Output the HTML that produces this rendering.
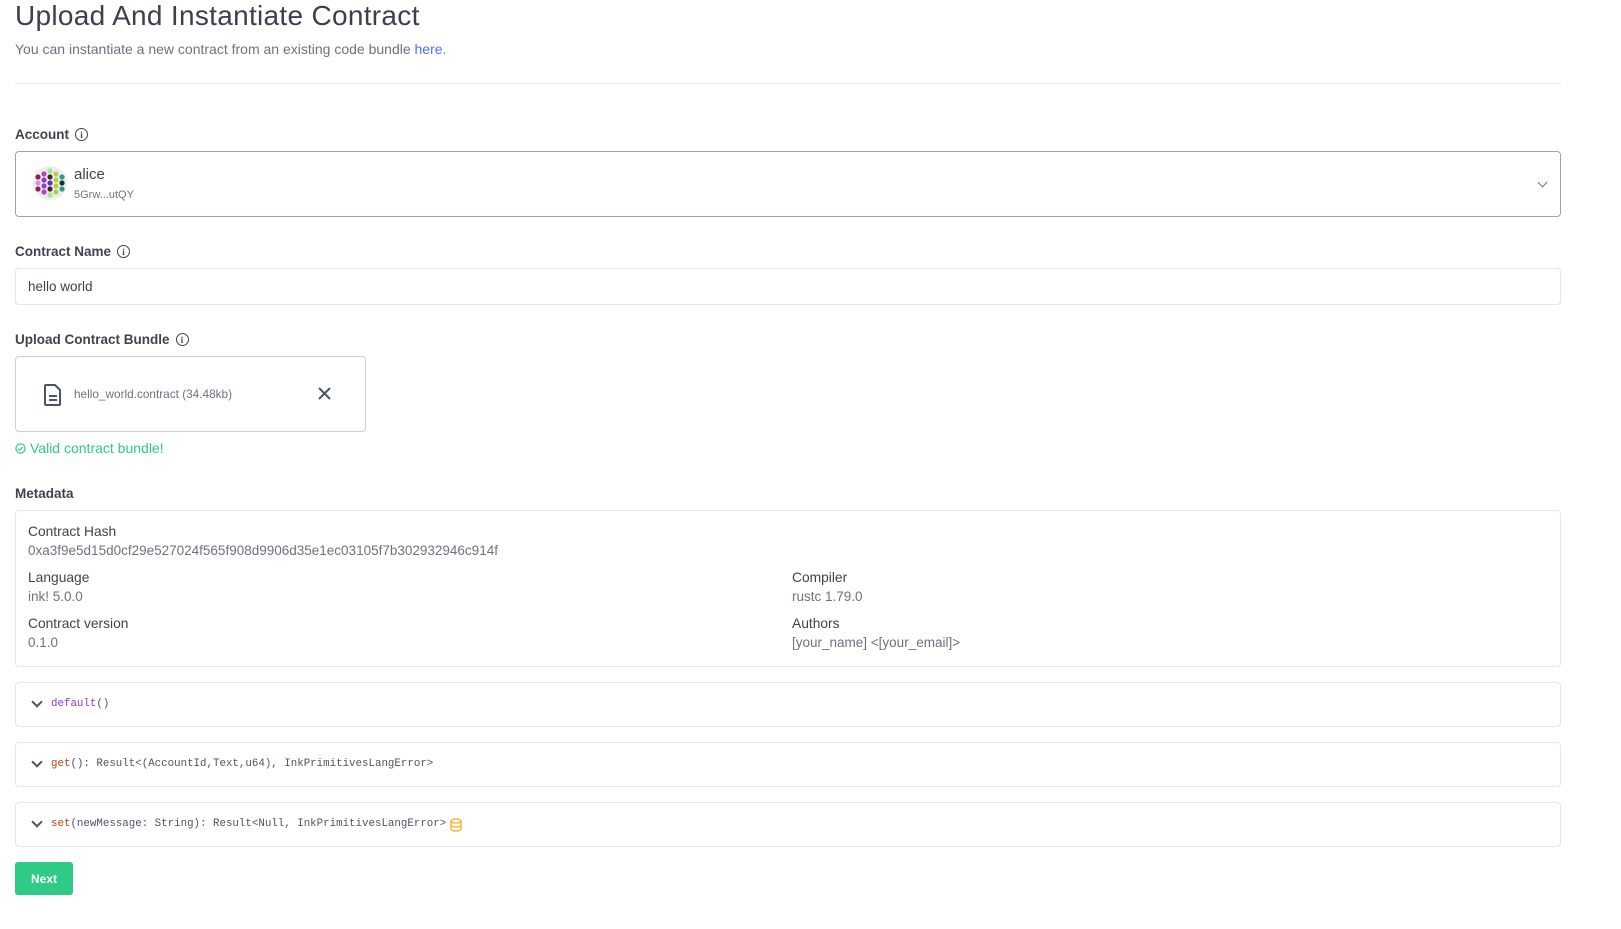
<!DOCTYPE html>
<html><head><meta charset="utf-8"><style>
*{box-sizing:border-box;margin:0;padding:0}
body{width:1621px;height:929px;background:#fff;font-family:"Liberation Sans",sans-serif;color:#3f4350;position:relative;overflow:hidden}
.a{position:absolute}
.lbl{font-size:13.5px;font-weight:bold;color:#3f4350;display:flex;align-items:center;gap:6px}
.info{width:13px;height:13px;border:1.3px solid #3f4350;border-radius:50%;display:inline-flex;align-items:center;justify-content:center;font-size:9px;font-weight:bold;font-family:"Liberation Serif",serif}
.box{border:1px solid #e5e7eb;border-radius:4px;background:#fff}
.mono{font-family:"Liberation Mono",monospace;font-size:10.8px;color:#4b5563}
.chev{position:absolute;left:17px;width:8px;height:8px;border-right:2px solid #4b5563;border-bottom:2px solid #4b5563;transform:rotate(45deg)}
.k{font-size:13.8px;color:#3f4350}
.v{font-size:13.5px;color:#6b7280}
</style></head><body>
<div class="a" style="left:15px;top:0px;font-size:28px;color:#3a404d;letter-spacing:0.3px">Upload And Instantiate Contract</div>
<div class="a" style="left:15px;top:41px;font-size:14px;color:#6b7280">You can instantiate a new contract from an existing code bundle <span style="color:#4f6ef7">here</span>.</div>
<div class="a" style="left:15px;top:83px;width:1546px;height:1px;background:#e5e7eb"></div>

<div class="a lbl" style="left:15px;top:127px">Account <span class="info">i</span></div>
<div class="a" style="left:15px;top:151px;width:1546px;height:66px;border:1px solid #9ca3af;border-radius:4px">
 <div class="a" style="left:17px;top:14px;width:34px;height:34px;border-radius:50%;background:#eee">
  <svg width="34" height="34" viewBox="0 0 34 34">
   <circle cx="17" cy="5" r="2.6" fill="#a6e39b"/><circle cx="11" cy="8" r="2.6" fill="#b341c9"/><circle cx="17" cy="11" r="2.6" fill="#3b2a1f"/><circle cx="23" cy="8" r="2.6" fill="#b7cf4a"/>
   <circle cx="5" cy="11" r="2.6" fill="#8b2155"/><circle cx="29" cy="11" r="2.6" fill="#2a9a92"/><circle cx="11" cy="14" r="2.6" fill="#8e3fd0"/><circle cx="23" cy="14" r="2.6" fill="#b7cf4a"/>
   <circle cx="5" cy="17" r="2.6" fill="#e38ed6"/><circle cx="17" cy="17" r="2.6" fill="#6330b9"/><circle cx="29" cy="17" r="2.6" fill="#23331d"/>
   <circle cx="11" cy="20" r="2.6" fill="#8e3fd0"/><circle cx="23" cy="20" r="2.6" fill="#b7cf4a"/><circle cx="5" cy="23" r="2.6" fill="#8b2155"/><circle cx="29" cy="23" r="2.6" fill="#2a9a92"/>
   <circle cx="17" cy="23" r="2.6" fill="#3b2a1f"/><circle cx="11" cy="26" r="2.6" fill="#b341c9"/><circle cx="23" cy="26" r="2.6" fill="#a6d34a"/><circle cx="17" cy="29" r="2.6" fill="#a6e39b"/>
  </svg></div>
 <div class="a" style="left:58px;top:14px;font-size:15px;color:#3f4350">alice</div>
 <div class="a" style="left:58px;top:37px;font-size:11px;color:#6b7280">5Grw...utQY</div>
 <div class="a" style="right:14px;top:27px;width:7px;height:7px;border-right:1.5px solid #6b7280;border-bottom:1.5px solid #6b7280;transform:rotate(45deg)"></div>
</div>

<div class="a lbl" style="left:15px;top:244px">Contract Name <span class="info">i</span></div>
<div class="a box" style="left:15px;top:268px;width:1546px;height:37px"><div class="a" style="left:12px;top:10px;font-size:13.5px;color:#3f4350">hello world</div></div>

<div class="a lbl" style="left:15px;top:332px">Upload Contract Bundle <span class="info">i</span></div>
<div class="a" style="left:15px;top:356px;width:351px;height:76px;border:1px solid #cbd0d8;border-radius:4px">
 <svg class="a" style="left:27px;top:26px" width="20" height="24" viewBox="0 0 20 24"><path d="M3 2h9l5 5v14a1 1 0 0 1-1 1H3a1 1 0 0 1-1-1V3a1 1 0 0 1 1-1z" fill="none" stroke="#4b5563" stroke-width="2" stroke-linejoin="round"/><path d="M6 13h8M6 17h8" stroke="#4b5563" stroke-width="2"/></svg>
 <div class="a" style="left:58px;top:30px;font-size:11.8px;color:#6b7280">hello_world.contract (34.48kb)</div>
 <svg class="a" style="left:302px;top:30px" width="13" height="13" viewBox="0 0 13 13"><path d="M1 1l11 11M12 1L1 12" stroke="#4b5563" stroke-width="2"/></svg>
</div>
<div class="a" style="left:15px;top:440px;font-size:14px;color:#2fcb86;display:flex;align-items:center;gap:4px"><svg width="11" height="11" viewBox="0 0 11 11"><circle cx="5.5" cy="5.5" r="4.6" fill="none" stroke="#2fcb86" stroke-width="1.2"/><path d="M3.3 5.6l1.5 1.5 3-3" fill="none" stroke="#2fcb86" stroke-width="1.2"/></svg>Valid contract bundle!</div>

<div class="a lbl" style="left:15px;top:486px">Metadata</div>
<div class="a box" style="left:15px;top:510px;width:1546px;height:157px">
 <div class="a k" style="left:12px;top:13px">Contract Hash</div>
 <div class="a v" style="left:12px;top:32px">0xa3f9e5d15d0cf29e527024f565f908d9906d35e1ec03105f7b302932946c914f</div>
 <div class="a k" style="left:12px;top:59px">Language</div>
 <div class="a v" style="left:12px;top:78px">ink! 5.0.0</div>
 <div class="a k" style="left:776px;top:59px">Compiler</div>
 <div class="a v" style="left:776px;top:78px">rustc 1.79.0</div>
 <div class="a k" style="left:12px;top:105px">Contract version</div>
 <div class="a v" style="left:12px;top:124px">0.1.0</div>
 <div class="a k" style="left:776px;top:105px">Authors</div>
 <div class="a v" style="left:776px;top:124px">[your_name] &lt;[your_email]&gt;</div>
</div>

<div class="a box" style="left:15px;top:682px;width:1546px;height:45px"><div class="chev" style="top:15px"></div><div class="a mono" style="left:35px;top:15px"><span style="color:#9333ea">default</span>()</div></div>
<div class="a box" style="left:15px;top:742px;width:1546px;height:45px"><div class="chev" style="top:15px"></div><div class="a mono" style="left:35px;top:15px"><span style="color:#c2410c">get</span>(): Result&lt;(AccountId,Text,u64), InkPrimitivesLangError&gt;</div></div>
<div class="a box" style="left:15px;top:802px;width:1546px;height:45px"><div class="chev" style="top:15px"></div><div class="a mono" style="left:35px;top:15px"><span style="color:#c2410c">set</span>(newMessage: String): Result&lt;Null, InkPrimitivesLangError&gt;</div>
 <svg class="a" style="left:434px;top:15px" width="12" height="14" viewBox="0 0 12 14"><ellipse cx="6" cy="3" rx="5" ry="2" fill="none" stroke="#f5b83d" stroke-width="1.5"/><path d="M1 3v8c0 1.1 2.2 2 5 2s5-.9 5-2V3M1 7c0 1.1 2.2 2 5 2s5-.9 5-2" fill="none" stroke="#f5b83d" stroke-width="1.5"/></svg></div>

<div class="a" style="left:15px;top:862px;width:58px;height:33px;background:#2fcb86;border-radius:3px;color:#fff;font-size:12px;font-weight:bold;display:flex;align-items:center;justify-content:center">Next</div>
</body></html>
